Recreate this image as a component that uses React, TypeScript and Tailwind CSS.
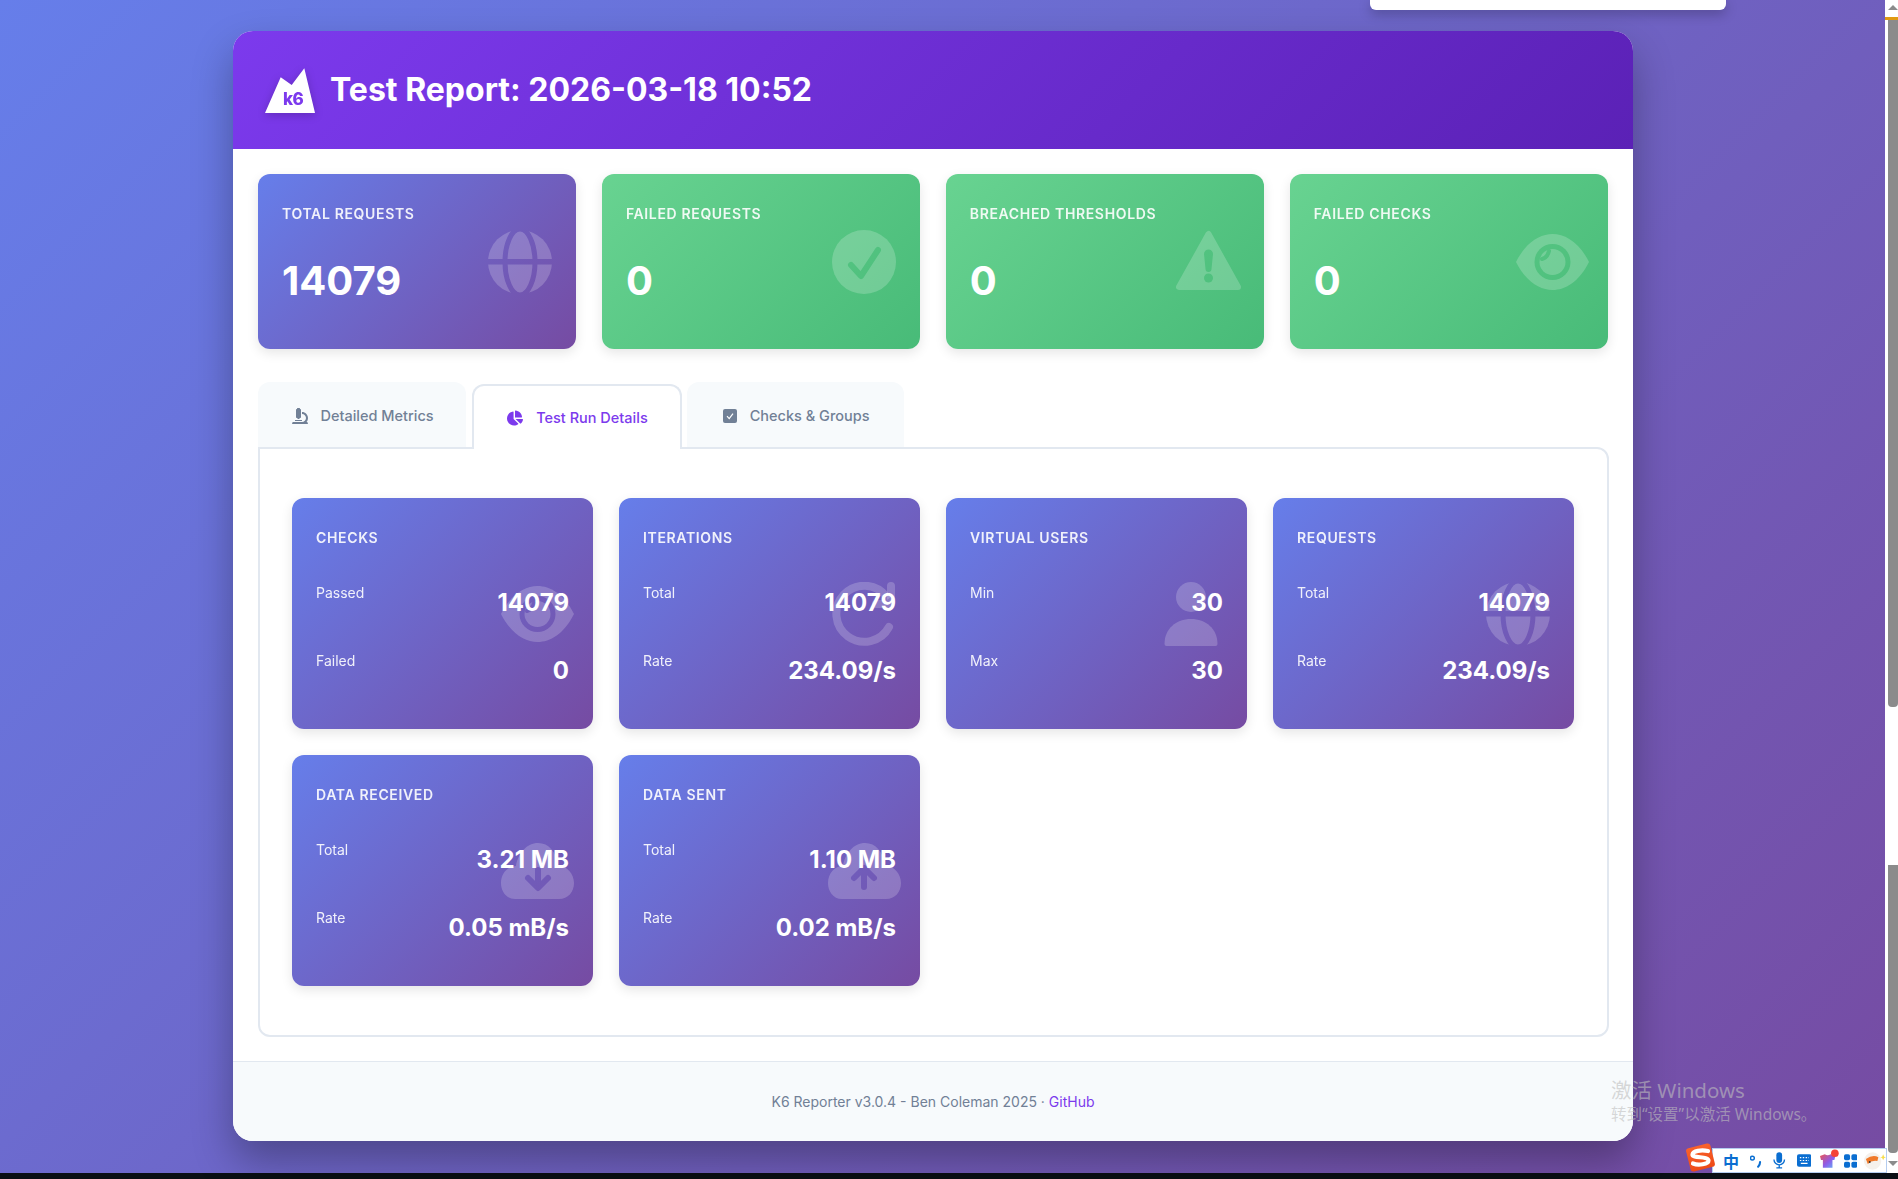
import React from "react";
import { FaMicroscope, FaChartPie } from "react-icons/fa";

type IconProps = { className?: string };

// big faded card icons, hand drawn since the fa ones have different strokes
const GlobeIcon = ({ className }: IconProps) => (
  <svg viewBox="0 0 64 64" width="64" height="64" className={className}>
    <mask id="globe-cut">
      <circle cx="32" cy="32" r="32" fill="#fff" />
      <rect x="0" y="29" width="64" height="5.5" fill="#000" />
      <ellipse cx="32" cy="32" rx="15" ry="33" fill="none" stroke="#000" strokeWidth="5" />
    </mask>
    <rect width="64" height="64" fill="currentColor" mask="url(#globe-cut)" />
  </svg>
);

const CheckCircleIcon = ({ className }: IconProps) => (
  <svg viewBox="0 0 64 64" width="64" height="64" className={className}>
    <mask id="check-cut">
      <circle cx="32" cy="32" r="32" fill="#fff" />
      <path d="M19 35 L29 46 L46 20" fill="none" stroke="#000" strokeWidth="6" strokeLinecap="round" strokeLinejoin="round" />
    </mask>
    <rect width="64" height="64" fill="currentColor" mask="url(#check-cut)" />
  </svg>
);

const WarningIcon = ({ className }: IconProps) => (
  <svg viewBox="0 0 65 64" width="65" height="64" className={className}>
    <mask id="warn-cut">
      <polygon points="32.5,4 3,57 62,57" fill="#fff" stroke="#fff" strokeWidth="6" strokeLinejoin="round" />
      <path d="M28 24 a4.5 4.5 0 0 1 9 0 L35.5 39 a3 3 0 0 1 -6 0 Z" fill="#000" />
      <circle cx="32.5" cy="48" r="4.5" fill="#000" />
    </mask>
    <rect width="65" height="64" fill="currentColor" mask="url(#warn-cut)" />
  </svg>
);

const EyeIcon = ({ className }: IconProps) => (
  <svg viewBox="0 0 73 56" width="73" height="56" className={className}>
    <mask id="eye-cut">
      <path d="M0 28 C10 8 24 0 36.5 0 C49 0 63 8 73 28 C63 48 49 56 36.5 56 C24 56 10 48 0 28Z" fill="#fff" />
      <circle cx="36.5" cy="28" r="18" fill="#000" />
      <circle cx="36.5" cy="28" r="13" fill="#fff" />
      <path d="M33 17 A9 12 0 0 1 26 25" fill="none" stroke="#000" strokeWidth="4" strokeLinecap="round" />
    </mask>
    <rect width="73" height="56" fill="currentColor" mask="url(#eye-cut)" />
  </svg>
);

const RedoIcon = ({ className }: IconProps) => (
  <svg viewBox="0 0 64 64" width="64" height="64" fill="none" stroke="currentColor" strokeWidth="8" strokeLinecap="round" strokeLinejoin="round" className={className}>
    <path d="M57 45 A28 28 0 1 1 54 14" />
    <path d="M59 4 V22 H44" />
  </svg>
);

const UserIcon = ({ className }: IconProps) => (
  <svg viewBox="0 0 64 64" width="64" height="64" fill="currentColor" className={className}>
    <ellipse cx="32" cy="15" rx="15" ry="15" />
    <path d="M5.5 62 C5.5 47 17 37 32 37 C47 37 58.5 47 58.5 62 Q58.5 64 56.5 64 H7.5 Q5.5 64 5.5 62 Z" />
  </svg>
);

const cloudPath =
  "M14 56 C5 56 0 48 0 40 C0 30 7 23 15 23 C17 10 26 0 37 0 C48 0 55 9 57 22 C66 23 73 31 73 40 C73 49 67 56 58 56 Z";

const CloudDownIcon = ({ className }: IconProps) => (
  <svg viewBox="0 0 73 56" width="73" height="56" className={className}>
    <mask id="cloud-down-cut">
      <path d={cloudPath} fill="#fff" />
      <path d="M37 27 V44 M27 35 L37 45 L47 35" fill="none" stroke="#000" strokeWidth="6" strokeLinecap="round" strokeLinejoin="round" />
    </mask>
    <rect width="73" height="56" fill="currentColor" mask="url(#cloud-down-cut)" />
  </svg>
);

const CloudUpIcon = ({ className }: IconProps) => (
  <svg viewBox="0 0 73 56" width="73" height="56" className={className}>
    <mask id="cloud-up-cut">
      <path d={cloudPath} fill="#fff" />
      <path d="M36 27 V44 M26 35 L36 25 L46 35" fill="none" stroke="#000" strokeWidth="6" strokeLinecap="round" strokeLinejoin="round" />
    </mask>
    <rect width="73" height="56" fill="currentColor" mask="url(#cloud-up-cut)" />
  </svg>
);

const CheckSquareIcon = ({ className }: IconProps) => (
  <svg viewBox="0 0 14 14" className={className}>
    <rect width="14" height="14" rx="2" fill="currentColor" />
    <path d="M4 7.2 L6.2 9.6 L10 4.6" fill="none" stroke="#fff" strokeWidth="1.2" />
  </svg>
);

const bigIcon = "absolute right-6 top-1/2 -translate-y-1/2 w-16 flex justify-center text-white/20";

const stats = [
  { label: "Total Requests", value: "14079", Icon: GlobeIcon, green: false },
  { label: "Failed Requests", value: "0", Icon: CheckCircleIcon, green: true },
  { label: "Breached Thresholds", value: "0", Icon: WarningIcon, green: true },
  { label: "Failed Checks", value: "0", Icon: EyeIcon, green: true },
];

const metrics = [
  { title: "Checks", Icon: EyeIcon, rows: [["Passed", "14079"], ["Failed", "0"]] },
  { title: "Iterations", Icon: RedoIcon, rows: [["Total", "14079"], ["Rate", "234.09/s"]] },
  { title: "Virtual Users", Icon: UserIcon, rows: [["Min", "30"], ["Max", "30"]] },
  { title: "Requests", Icon: GlobeIcon, rows: [["Total", "14079"], ["Rate", "234.09/s"]] },
  { title: "Data Received", Icon: CloudDownIcon, rows: [["Total", "3.21 MB"], ["Rate", "0.05 mB/s"]] },
  { title: "Data Sent", Icon: CloudUpIcon, rows: [["Total", "1.10 MB"], ["Rate", "0.02 mB/s"]] },
];

const K6Logo = () => (
  <svg width="50" height="45" viewBox="0 0 50 45" className="shrink-0 drop-shadow-[0_2px_4px_rgba(0,0,0,0.2)]">
    <polygon points="0,45 15.7,9.3 26.7,17 39.3,0.3 50,45" fill="#fff" />
    <text x="18" y="37" fontSize="17" fontWeight="800" fill="#7c3aed" fontFamily="Inter, sans-serif" letterSpacing="-0.5">
      k6
    </text>
  </svg>
);

const StatCard = ({ label, value, Icon, green }: (typeof stats)[number]) => (
  <div
    className={`relative h-[175px] rounded-xl px-6 pt-[30px] text-white shadow-[0_4px_12px_rgba(0,0,0,0.1)] ${
      green
        ? "bg-[linear-gradient(135deg,#68d391_0%,#48bb78_100%)]"
        : "bg-[linear-gradient(135deg,#667eea_0%,#764ba2_100%)]"
    }`}
  >
    <div className="text-sm leading-5 font-semibold uppercase tracking-[0.65px] opacity-90">{label}</div>
    <div className="relative z-10 mt-[33px] text-[40px] leading-[48px] font-bold">{value}</div>
    <div className={bigIcon}>
      <Icon className="shrink-0" />
    </div>
  </div>
);

const MetricCard = ({ title, Icon, rows }: (typeof metrics)[number]) => (
  <div className="relative h-[231px] rounded-xl bg-[linear-gradient(135deg,#667eea_0%,#764ba2_100%)] px-6 pt-[30px] text-white shadow-[0_4px_12px_rgba(0,0,0,0.1)]">
    <div className="text-sm leading-5 font-semibold uppercase tracking-[0.65px] opacity-90">{title}</div>
    <div className={bigIcon}>
      <Icon className="shrink-0" />
    </div>
    <div className="relative z-10 mt-[35px]">
      {rows.map(([name, val]) => (
        <div key={name} className="flex h-[68px] items-start justify-between">
          <span className="text-sm leading-5 opacity-90">{name}</span>
          <span className="mt-[2px] text-2xl leading-9 font-bold">{val}</span>
        </div>
      ))}
    </div>
  </div>
);

const SogouLogo = () => (
  <svg width="31" height="31" viewBox="0 0 31 31" className="relative z-10 -mr-[4px] shrink-0">
    <defs>
      <linearGradient id="sogou" x1="0" y1="0" x2="0" y2="1">
        <stop offset="0" stopColor="#f9622b" />
        <stop offset="1" stopColor="#ee4a17" />
      </linearGradient>
    </defs>
    <rect x="3" y="3.5" width="25" height="24" rx="3" fill="url(#sogou)" transform="rotate(-14 15.5 15.5)" />
    <path d="M23 9 C16 7.5 8 9 7.5 12.5 C7 16.5 23.5 14 23.5 18.5 C23.5 22.5 13 23.5 8 21.5" fill="none" stroke="#fff" strokeWidth="4.2" strokeLinecap="round" />
  </svg>
);

const ImeBar = () => (
  <div className="absolute bottom-[6px] left-[1685px] flex items-end">
    <SogouLogo />
    <div className="flex h-[25px] w-[175px] items-center border border-[#b4cdf0] bg-white pl-[10px]">
      <span className="w-[16px] text-[16px] leading-none font-bold text-[#0a6ed1] font-['Noto_Sans_CJK_SC',sans-serif]">中</span>
      <svg width="13" height="14" viewBox="0 0 13 14" className="ml-[11px]">
        <circle cx="2.5" cy="4" r="2" fill="none" stroke="#0a6ed1" strokeWidth="1.5" />
        <path d="M10.5 8 Q10.5 11 8.5 13" fill="none" stroke="#0a6ed1" strokeWidth="2.2" strokeLinecap="round" />
      </svg>
      <svg width="13" height="17" viewBox="0 0 13 17" className="ml-[11px]">
        <rect x="3.5" y="0" width="6" height="11" rx="3" fill="#0a6ed1" />
        <path d="M1 7.5 a5.5 5.5 0 0 0 11 0 M6.5 13 v3 M3.5 16.2 h6" fill="none" stroke="#0a6ed1" strokeWidth="1.4" />
      </svg>
      <svg width="15" height="13" viewBox="0 0 15 13" className="ml-[11px]">
        <rect width="15" height="13" rx="2" fill="#0a6ed1" />
        <path d="M3 3.5h1.5M6 3.5h1.5M9 3.5h1.5M12 3.5h.5M3 6.5h1.5M6 6.5h1.5M9 6.5h1.5M12 6.5h.5M4 9.5h7" stroke="#fff" strokeWidth="1.3" />
      </svg>
      <svg width="20" height="20" viewBox="0 0 20 20" className="ml-[9px] -translate-y-[2px]">
        <defs>
          <linearGradient id="shirt" x1="0" y1="0" x2="1" y2="1">
            <stop offset="0" stopColor="#ef5350" />
            <stop offset="0.55" stopColor="#8e5be8" />
            <stop offset="1" stopColor="#63b3f5" />
          </linearGradient>
        </defs>
        <path d="M0 7 L5 5 Q8 7 11 5 L16 7 L15 11 L13 11 L13 19 L3 19 L3 11 L1 11 Z" fill="url(#shirt)" />
        <circle cx="15.5" cy="4" r="4" fill="#f44336" />
      </svg>
      <svg width="14" height="14" viewBox="0 0 14 14" className="ml-[4px]">
        <rect width="6.3" height="6.3" rx="1.8" fill="#0a6ed1" />
        <rect x="7.7" width="6.3" height="6.3" rx="1.8" fill="#0a6ed1" />
        <rect y="7.7" width="6.3" height="6.3" rx="1.8" fill="#0a6ed1" />
        <rect x="7.7" y="7.7" width="6.3" height="6.3" rx="1.8" fill="#0a6ed1" />
      </svg>
      <svg width="24" height="20" viewBox="0 0 24 20" className="ml-[6px]">
        <circle cx="10" cy="10" r="9" fill="#f5f1ec" />
        <path d="M3 8 Q10 3 16 6 L15 10 Q9 9 5 13 Z" fill="#f07a2b" />
        <circle cx="7" cy="11" r="1" fill="#333" />
        <path d="M21 3 l1 2.5 2 .5 -2 .8 -1 2.5 -1-2.5 -2-.8 2-.5z" fill="#f7df4b" />
      </svg>
    </div>
  </div>
);

const ScrollBar = () => (
  <div className="flex w-[13px] shrink-0 flex-col bg-white">
    <div className="mt-[5px] ml-[3px] h-0 w-0 border-x-[5px] border-b-[5px] border-x-transparent border-b-[#8b8b8b]" />
    <div className="mt-[7px] h-[3px] bg-[#e09a12]" />
    <div className="ml-[3px] h-[687px] w-[10px] rounded-b-[4px] bg-[#8b8b8b]" />
    <div className="ml-[3px] mt-[158px] h-[288px] w-[10px] rounded-b-[4px] bg-[#8b8b8b]" />
    <div className="mt-[8px] ml-[3px] h-0 w-0 border-x-[5px] border-t-[5px] border-x-transparent border-t-[#8b8b8b]" />
  </div>
);

export default function App() {
  return (
    <div className="relative flex h-screen w-full flex-col overflow-hidden bg-[#0a0f14] font-['Inter',sans-serif]">
      <div className="flex min-h-0 flex-1">
        <div className="flex-1 bg-[linear-gradient(135deg,#667eea_0%,#764ba2_100%)] pt-[31px] pl-[233px]">
          <div className="w-[1400px] overflow-hidden rounded-[20px] bg-white shadow-[0_20px_40px_rgba(0,0,0,0.3)]">
            <header className="flex h-[118px] items-center gap-[15px] bg-[linear-gradient(135deg,#7c3aed_0%,#5b21b6_100%)] pl-8 text-white">
              <K6Logo />
              <h1 className="text-[32px] leading-10 font-bold">Test Report: 2026-03-18 10:52</h1>
            </header>

            <div className="grid grid-cols-4 gap-[25.6px] px-[25px] pt-[25px]">
              {stats.map((s) => (
                <StatCard key={s.label} {...s} />
              ))}
            </div>

            <div className="mx-[24.5px] mt-[33px]">
              <div className="flex text-[14.5px] font-medium">
                <button className="flex h-[65px] items-center gap-[13px] rounded-t-xl bg-[#f7fafc] pr-[32px] pl-[34px] pt-[3px] text-[#718096]">
                  <FaMicroscope className="h-4 w-4" />
                  Detailed Metrics
                </button>
                <button className="relative z-10 mt-[2px] -mb-[2px] ml-[6px] flex h-[65px] items-center gap-[13px] rounded-t-xl border-2 border-b-0 border-[#e2e8f0] bg-white pr-8 pl-[33.5px] pt-[1px] text-[#7c3aed]">
                  <FaChartPie className="h-4 w-4" />
                  Test Run Details
                </button>
                <button className="ml-[5px] flex h-[65px] items-center gap-[13px] rounded-t-xl bg-[#f7fafc] pr-[34px] pl-[36px] pt-[3px] text-[#718096]">
                  <CheckSquareIcon className="h-[14px] w-[14px]" />
                  Checks &amp; Groups
                </button>
              </div>
              <div className="grid grid-cols-4 gap-[26px] rounded-xl rounded-tl-none border-2 border-[#e2e8f0] px-[32.5px] py-[49px]">
                {metrics.map((m) => (
                  <MetricCard key={m.title} {...m} />
                ))}
              </div>
            </div>

            <footer className="mt-[24px] flex h-[80px] items-center justify-center border-t border-[#e2e8f0] bg-[#f7fafc] text-sm text-[#718096]">
              <span>
                K6 Reporter v3.0.4 - Ben Coleman 2025 · <a className="text-[#7c3aed]">GitHub</a>
              </span>
            </footer>
          </div>
        </div>
        <ScrollBar />
      </div>
      <div className="h-[6px] shrink-0" />

      {/* stuff lying over the page in the screenshot */}
      <div className="absolute top-0 left-[1370px] h-[10px] w-[356px] rounded-b-md bg-white shadow-[0_4px_12px_rgba(0,0,0,0.25)]" />
      <div className="pointer-events-none absolute top-[1077px] left-[1611px] font-['Noto_Sans','Noto_Sans_CJK_SC',sans-serif] text-[rgba(190,190,190,0.6)]">
        <div className="text-[20.5px] leading-[26px]">激活 Windows</div>
        <div className="mt-[1px] text-[15.5px] leading-[20px]">转到“设置”以激活 Windows。</div>
      </div>
      <ImeBar />
    </div>
  );
}
